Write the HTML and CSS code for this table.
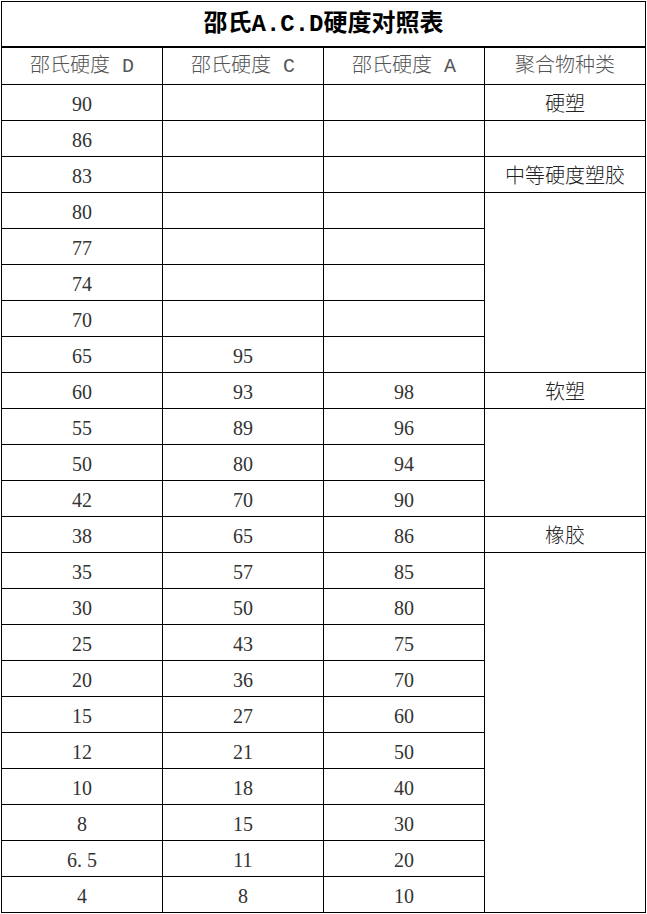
FILE: index.html
```html
<!DOCTYPE html>
<html lang="zh">
<head>
<meta charset="utf-8">
<link rel="stylesheet" href="styles.css">
</head>
<body>
<table class="sheet">
  <colgroup><col class="c"><col class="c"><col class="c"><col class="c"></colgroup>
  <tr class="title"><td colspan="4">邵氏A.C.D硬度对照表</td></tr>
  <tr class="head"><td>邵氏硬度 D</td><td>邵氏硬度 C</td><td>邵氏硬度 A</td><td>聚合物种类</td></tr>
  <tr><td>90</td><td></td><td></td><td class="kind">硬塑</td></tr>
  <tr><td>86</td><td></td><td></td><td></td></tr>
  <tr><td>83</td><td></td><td></td><td class="kind">中等硬度塑胶</td></tr>
  <tr><td>80</td><td></td><td></td><td rowspan="5"></td></tr>
  <tr><td>77</td><td></td><td></td></tr>
  <tr><td>74</td><td></td><td></td></tr>
  <tr><td>70</td><td></td><td></td></tr>
  <tr><td>65</td><td>95</td><td></td></tr>
  <tr><td>60</td><td>93</td><td>98</td><td class="kind">软塑</td></tr>
  <tr><td>55</td><td>89</td><td>96</td><td rowspan="3"></td></tr>
  <tr><td>50</td><td>80</td><td>94</td></tr>
  <tr><td>42</td><td>70</td><td>90</td></tr>
  <tr><td>38</td><td>65</td><td>86</td><td class="kind">橡胶</td></tr>
  <tr><td>35</td><td>57</td><td>85</td><td rowspan="10"></td></tr>
  <tr><td>30</td><td>50</td><td>80</td></tr>
  <tr><td>25</td><td>43</td><td>75</td></tr>
  <tr><td>20</td><td>36</td><td>70</td></tr>
  <tr><td>15</td><td>27</td><td>60</td></tr>
  <tr><td>12</td><td>21</td><td>50</td></tr>
  <tr><td>10</td><td>18</td><td>40</td></tr>
  <tr><td>8</td><td>15</td><td>30</td></tr>
  <tr><td>6. 5</td><td>11</td><td>20</td></tr>
  <tr><td>4</td><td>8</td><td>10</td></tr>
</table>
</body>
</html>
```

FILE: styles.css
```css
html, body {
  margin: 0;
  padding: 0;
  background: #fff;
}
body {
  padding: 1px 0 0 1px;
}
.sheet {
  border-collapse: collapse;
  table-layout: fixed;
  width: 645px;
  font-family: "Liberation Serif", "Noto Sans CJK SC", serif;
  font-size: 20px;
  color: #333;
}
.sheet .c {
  width: 161px;
}
.sheet td {
  border: 1px solid #000;
  height: 33px;
  padding: 2px 0 0;
  text-align: center;
  vertical-align: middle;
  line-height: 20px;
}
.sheet .title td {
  height: 43px;
  padding: 1px 0 0;
  font-family: "Liberation Mono", "Noto Sans CJK SC", monospace;
  font-size: 24px;
  font-weight: bold;
  color: #000;
  border-bottom: 2px solid #000;
}
.sheet .head td {
  height: 34px;
  font-family: "Liberation Mono", "Noto Sans CJK SC", monospace;
  font-size: 20px;
  font-weight: 300;
  color: #555;
}
.sheet .kind {
  font-size: 20px;
  font-weight: 300;
  color: #222;
}
```
